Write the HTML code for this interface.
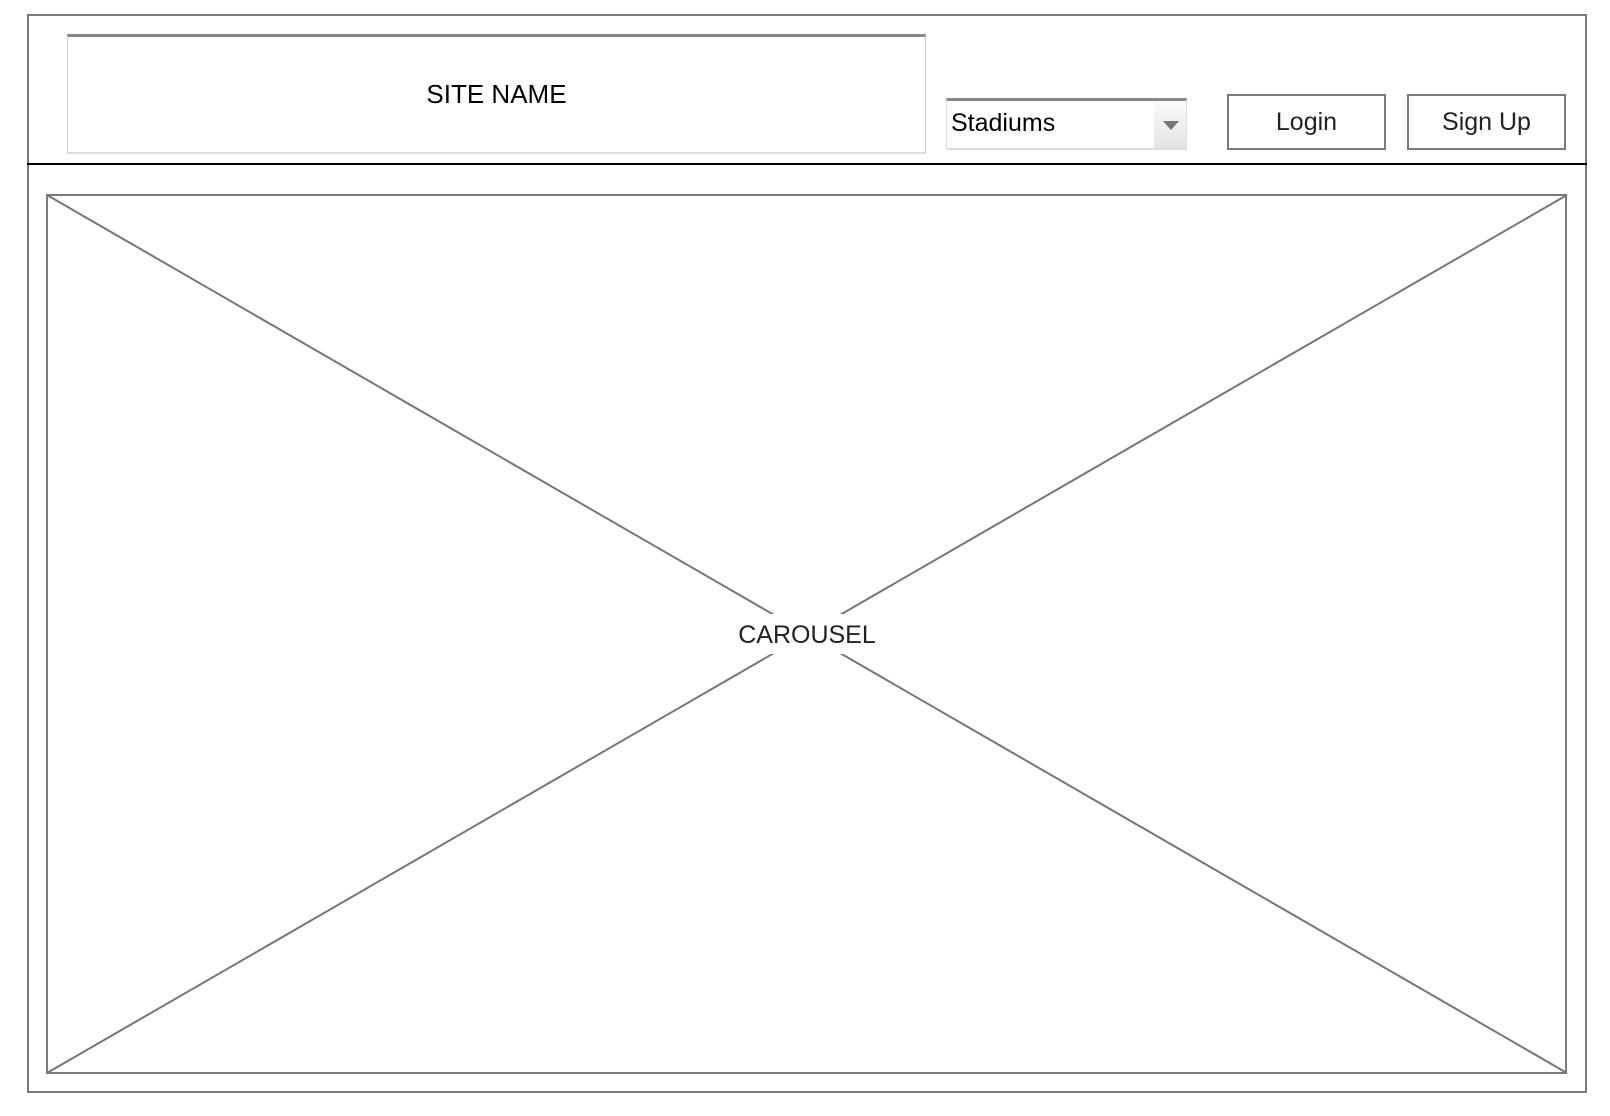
<!DOCTYPE html>
<html><head><style>
body{margin:0;width:1610px;height:1116px;background:#fff;position:relative;overflow:hidden;font-family:"Liberation Sans",Arial,sans-serif;}
.a{position:absolute;box-sizing:border-box;}
</style></head><body>
<div class="a" style="left:27px;top:14px;width:1560px;height:1079px;border:2px solid #7a7a7a;"></div>
<div class="a" style="left:27px;top:163px;width:1560px;height:2px;background:#000;"></div>
<div class="a" style="left:67px;top:34px;width:859px;height:120px;border:1px solid #ccc;border-top:3px solid #888;border-bottom:2px solid #ddd;display:flex;align-items:center;justify-content:center;font-size:26px;color:#000;">SITE NAME</div>
<div class="a" style="left:946px;top:98px;width:241px;height:52px;border:1px solid #ddd;border-top:3px solid #888;border-bottom:2px solid #ddd;">
<div class="a" style="left:4px;top:0;height:47px;line-height:44px;font-size:25px;color:#000;">Stadiums</div>
<div class="a" style="right:0;top:0;width:32px;height:47px;background:linear-gradient(#fafafa,#e4e4e4);"></div>
<div class="a" style="right:7px;top:20px;width:0;height:0;border-left:8px solid transparent;border-right:8px solid transparent;border-top:9px solid #777;"></div>
</div>
<div class="a" style="left:1227px;top:94px;width:159px;height:56px;border:2px solid #7a7a7a;display:flex;align-items:center;justify-content:center;font-size:25px;color:#222;">Login</div>
<div class="a" style="left:1407px;top:94px;width:159px;height:56px;border:2px solid #7a7a7a;display:flex;align-items:center;justify-content:center;font-size:25px;color:#222;">Sign Up</div>
<svg class="a" style="left:46px;top:194px" width="1522" height="881">
<rect x="1" y="1" width="1519" height="878" fill="#fff" stroke="#7a7a7a" stroke-width="2"/>
<line x1="1" y1="1" x2="1521" y2="879" stroke="#777" stroke-width="2"/>
<line x1="1521" y1="1" x2="1" y2="879" stroke="#777" stroke-width="2"/>
<rect x="682" y="420" width="158" height="40" fill="#fff"/>
<text x="761" y="449" text-anchor="middle" font-family="Liberation Sans, Arial, sans-serif" font-size="25" fill="#222">CAROUSEL</text>
</svg>
</body></html>
